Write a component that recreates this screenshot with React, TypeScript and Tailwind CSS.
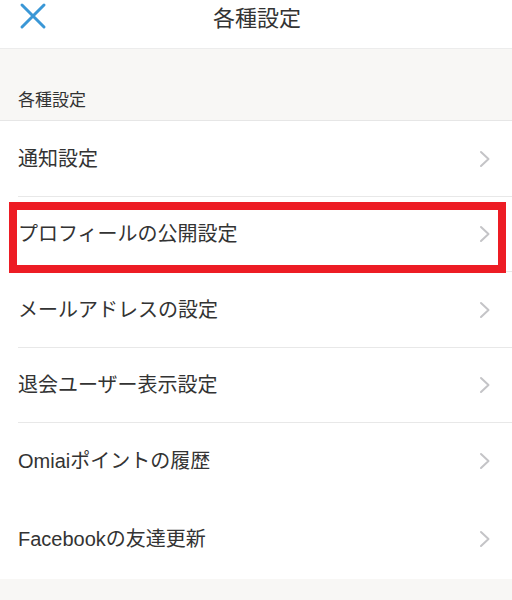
const items = [
  { label: '通知設定' },
  { label: 'プロフィールの公開設定', highlight: true },
  { label: 'メールアドレスの設定' },
  { label: '退会ユーザー表示設定' },
  { label: 'Omiaiポイントの履歴', noDivider: true },
  { label: 'Facebookの友達更新', last: true },
];

function Chevron() {
  return (
    <svg width="12" height="18" viewBox="0 0 12 18" fill="none" className="shrink-0">
      <path d="M2 2l7.5 7L2 16" stroke="#c4c4c7" strokeWidth="2" strokeLinecap="round" strokeLinejoin="round" />
    </svg>
  );
}

function CloseIcon() {
  return (
    <svg width="28" height="28" viewBox="0 0 28 28" fill="none" className="absolute left-[19px] top-[2px]">
      <path d="M3 3l22 22M25 3L3 25" stroke="#3a97d6" strokeWidth="3" strokeLinecap="round" />
    </svg>
  );
}

export default function App() {
  return (
    <div
      className="w-[512px] h-[600px] overflow-hidden bg-[#f8f7f5] text-[#333]"
      style={{ fontFamily: '"Liberation Sans", "Noto Sans CJK JP", sans-serif' }}
    >
      <header className="h-[49px] bg-white border-b border-[#ececec] flex items-center relative">
        <CloseIcon />
        <h1 className="w-full text-center text-[22px] leading-none -mt-[11px] pl-[2px]">各種設定</h1>
      </header>

      <div className="h-[72px] border-b border-[#e6e6e6] flex items-end pb-[11px] px-[18px]">
        <span className="text-[17px] leading-none">各種設定</span>
      </div>

      <ul className="bg-white">
        {items.map((it) => (
          <li key={it.label} className={it.last ? 'h-[80px] relative' : 'h-[75.5px] relative'}>
            <div className="h-full flex items-center pl-[18px] pr-[21px]">
              <span className="flex-1 text-[20px] leading-none">{it.label}</span>
              <Chevron />
            </div>
            {!it.last && !it.noDivider && (
              <div className="absolute left-[18px] right-0 bottom-0 h-px bg-[#e8e8e8]" />
            )}
            {it.highlight && (
              <div className="absolute left-[9px] top-[5px] w-[497px] h-[71px] border-[8px] border-[#ed1c24]" />
            )}
          </li>
        ))}
      </ul>
    </div>
  );
}
